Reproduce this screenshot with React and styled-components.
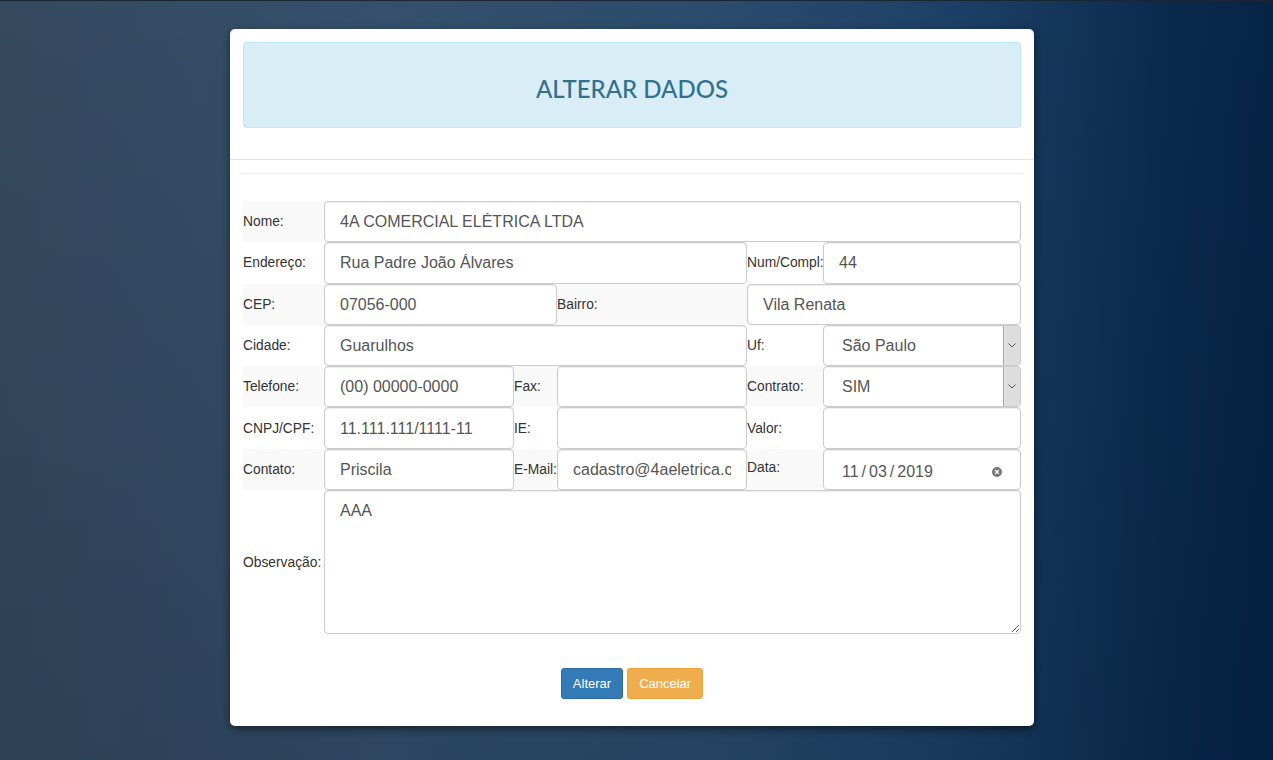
import React from "react";
import styled, { createGlobalStyle } from "styled-components";

const Global = createGlobalStyle`
  html, body { margin: 0; padding: 0; }
  body { font-family: "Liberation Sans", Arial, sans-serif; }
  * { box-sizing: border-box; }
`;

const Page = styled.div`
  min-height: 100vh;
  border-top: 1px solid #1c2633;
  padding-top: 28px;
  background:
    linear-gradient(to bottom, rgba(0, 8, 25, 0) 0%, rgba(0, 8, 25, 0.14) 100%),
    linear-gradient(to right, #35495f 0%, #34506c 30%, #2b4c6d 55%, #1c4065 75%, #0a2a4c 92%, #062446 100%);
`;

const Card = styled.div`
  width: 804px;
  margin-left: 230px;
  background: #fff;
  border-radius: 5px;
  box-shadow: 0 3px 9px rgba(0, 0, 0, 0.5);
`;

const CardHeader = styled.div`
  padding: 13px 13px 31px;
  border-bottom: 1px solid #e5e5e5;
`;

const TitleBox = styled.div`
  height: 86px;
  background: #d9edf7;
  border: 1px solid #bce8f1;
  border-radius: 4px;
  display: flex;
  align-items: center;
  justify-content: center;
`;

const Title = styled.h3`
  margin: 0;
  padding-top: 6px;
  font-family: Lato, "Open Sans", sans-serif;
  font-weight: 500;
  font-size: 24px;
  color: #31708f;
`;

const CardBody = styled.div`
  padding: 13px 13px 27px;
`;

const Rule = styled.hr`
  margin: 0 0 27px;
  border: 0;
  border-top: 1px solid #eee;
`;

const Table = styled.div`
  display: flex;
  flex-direction: column;
`;

const Row = styled.div`
  display: grid;
  grid-template-columns: 81px 190px 43px 190px 76px 198px;
  height: ${(p) => p.$h || "41.3px"};
  background: ${(p) => (p.$striped ? "#f9f9f9" : "#fff")};
`;

const Label = styled.div`
  grid-column: span ${(p) => p.$span || 1};
  display: flex;
  align-items: center;
  font-size: 13.8px;
  color: #333;
  white-space: nowrap;
  padding-bottom: ${(p) => (p.$raise ? "3px" : "0")};
`;

const Field = styled.input`
  grid-column: span ${(p) => p.$span || 1};
  width: 100%;
  height: 100%;
  min-width: 0;
  border: 1px solid #ccc;
  border-radius: 4px;
  padding: 1px 15px 0;
  font-family: "Liberation Sans", Arial, sans-serif;
  font-size: 16px;
  color: #555;
  background: #fff;
  box-shadow: inset 0 1px 1px rgba(0, 0, 0, 0.075);
  outline: none;
`;

const SelectBox = styled.div`
  grid-column: span ${(p) => p.$span || 1};
  display: flex;
  align-items: stretch;
  border: 1px solid #ccc;
  border-radius: 4px;
  background: #fff;
  box-shadow: inset 0 1px 1px rgba(0, 0, 0, 0.075);
  font-size: 16px;
  color: #555;
  overflow: hidden;
`;

const SelectText = styled.div`
  flex: 1;
  display: flex;
  align-items: center;
  padding: 1px 0 0 18px;
`;

const SelectButton = styled.div`
  width: 17px;
  background: #dddddd;
  border-left: 1px solid #a9a9a9;
  display: flex;
  align-items: center;
  justify-content: center;
`;

const DateBox = styled(SelectBox)`
  padding: 6px 0 0 18px;
  align-items: center;
`;

const DateText = styled.div`
  flex: 1;
  display: flex;
  align-items: center;
  gap: 2px;
`;

const Slash = styled.span`
  margin: 0 1px;
`;

const ClearIcon = styled.div`
  width: 10px;
  height: 10px;
  margin-right: 18px;
  border-radius: 50%;
  background: #777;
  display: flex;
  align-items: center;
  justify-content: center;
`;

const Notes = styled.textarea`
  grid-column: span 5;
  width: 100%;
  height: 100%;
  border: 1px solid #ccc;
  border-radius: 4px;
  padding: 9px 15px;
  font-family: "Liberation Sans", Arial, sans-serif;
  font-size: 16px;
  line-height: 1.42857;
  color: #555;
  box-shadow: inset 0 1px 1px rgba(0, 0, 0, 0.075);
  resize: both;
  outline: none;
`;

const Actions = styled.div`
  display: flex;
  justify-content: center;
  gap: 4px;
  margin-top: 34px;
`;

const Button = styled.button`
  height: 31px;
  padding: 0 11px;
  border-radius: 3px;
  border: 1px solid ${(p) => (p.$variant === "warning" ? "#eea236" : "#2e6da4")};
  background: ${(p) => (p.$variant === "warning" ? "#f0ad4e" : "#337ab7")};
  color: #fff;
  font-family: "Liberation Sans", Arial, sans-serif;
  font-size: 13px;
  cursor: pointer;
`;

const Chevron = () => (
  <svg width="8" height="5" viewBox="0 0 8 5">
    <path d="M0.5 0.5 L4 4 L7.5 0.5" fill="none" stroke="#555" strokeWidth="1" />
  </svg>
);

const Select = ({ value, span }) => (
  <SelectBox $span={span}>
    <SelectText>{value}</SelectText>
    <SelectButton>
      <Chevron />
    </SelectButton>
  </SelectBox>
);

const Input = ({ value = "", span }) => <Field $span={span} readOnly defaultValue={value} />;

export default function App() {
  return (
    <>
      <Global />
      <Page>
        <Card>
          <CardHeader>
            <TitleBox>
              <Title>ALTERAR DADOS</Title>
            </TitleBox>
          </CardHeader>
          <CardBody>
            <Rule />
            <Table>
              <Row $striped>
                <Label>Nome:</Label>
                <Input span={5} value="4A COMERCIAL ELÉTRICA LTDA" />
              </Row>
              <Row>
                <Label>Endereço:</Label>
                <Input span={3} value="Rua Padre João Álvares" />
                <Label>Num/Compl:</Label>
                <Input value="44" />
              </Row>
              <Row $striped>
                <Label>CEP:</Label>
                <Input span={2} value="07056-000" />
                <Label>Bairro:</Label>
                <Input span={2} value="Vila Renata" />
              </Row>
              <Row>
                <Label>Cidade:</Label>
                <Input span={3} value="Guarulhos" />
                <Label>Uf:</Label>
                <Select value="São Paulo" />
              </Row>
              <Row $striped>
                <Label>Telefone:</Label>
                <Input value="(00) 00000-0000" />
                <Label>Fax:</Label>
                <Input />
                <Label>Contrato:</Label>
                <Select value="SIM" />
              </Row>
              <Row>
                <Label>CNPJ/CPF:</Label>
                <Input value="11.111.111/1111-11" />
                <Label>IE:</Label>
                <Input />
                <Label>Valor:</Label>
                <Input />
              </Row>
              <Row $striped>
                <Label>Contato:</Label>
                <Input value="Priscila" />
                <Label>E-Mail:</Label>
                <Input value="cadastro@4aeletrica.com.br" />
                <Label $raise>Data:</Label>
                <DateBox>
                  <DateText>
                    11<Slash>/</Slash>03<Slash>/</Slash>2019
                  </DateText>
                  <ClearIcon>
                    <svg width="6" height="6" viewBox="0 0 6 6">
                      <path d="M1 1 L5 5 M5 1 L1 5" stroke="#fff" strokeWidth="1.3" />
                    </svg>
                  </ClearIcon>
                </DateBox>
              </Row>
              <Row $h="144px">
                <Label>Observação:</Label>
                <Notes readOnly defaultValue="AAA" />
              </Row>
            </Table>
            <Actions>
              <Button>Alterar</Button>
              <Button $variant="warning">Cancelar</Button>
            </Actions>
          </CardBody>
        </Card>
      </Page>
    </>
  );
}
